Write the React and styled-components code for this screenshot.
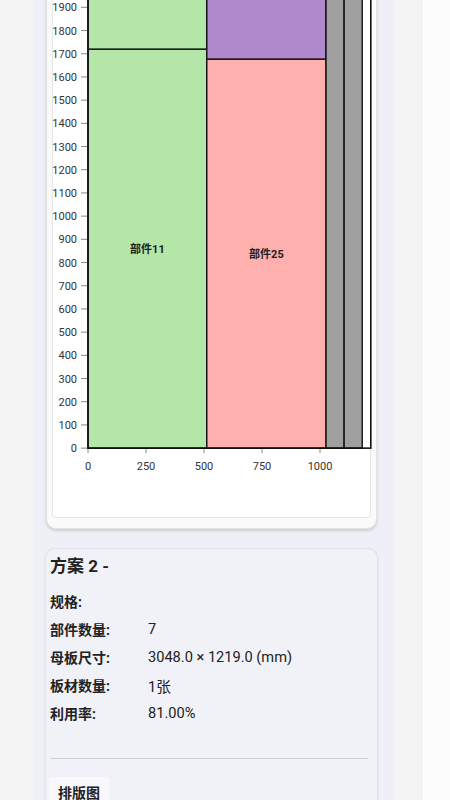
import React from 'react';
import styled, { createGlobalStyle } from 'styled-components';

const GlobalStyle = createGlobalStyle`
  body {
    margin: 0;
    background: #f5f5f5;
    font-family: Roboto, "Noto Sans CJK SC", sans-serif;
    color: #222;
  }
`;

// sheet size in mm (x = width, y = length) and px per mm
const SHEET_W = 1219;
const SHEET_H = 3048;
const S = 0.232;
const PAD_L = 35;
const PAD_T = 10;
const PAD_B = 69;

const parts = [
  { name: '部件11', x: 0, y: 0, w: 512, h: 1720, fill: '#b4e6a8' },
  { name: '部件12', x: 0, y: 1720, w: 512, h: 1240, fill: '#b4e6a8' },
  { name: '部件25', x: 512, y: 0, w: 514, h: 1677, fill: '#feb0ae' },
  { name: '部件26', x: 512, y: 1677, w: 514, h: 1300, fill: '#b088cc' },
  { name: '', x: 1026, y: 0, w: 78, h: SHEET_H, fill: '#a0a0a0' },
  { name: '', x: 1104, y: 0, w: 78, h: SHEET_H, fill: '#a0a0a0' },
];

const specs = [
  { label: '规格:', value: '' },
  { label: '部件数量:', value: '7' },
  { label: '母板尺寸:', value: '3048.0 × 1219.0 (mm)' },
  { label: '板材数量:', value: '1张' },
  { label: '利用率:', value: '81.00%' },
];

const Shell = styled.div`
  display: flex;
  min-height: calc(100vh + 289px);
  margin-top: -289px;
`;

const Gutter = styled.div`
  width: 33px;
  background: #f4f4f4;
`;

const Column = styled.main`
  width: 360px;
  background: #efeff7;
  padding-top: 12px;
  display: flex;
  flex-direction: column;
`;

const Side = styled.div`
  flex: 1;
  background: linear-gradient(to right, #f4f4f4 0 30px, #fcfcfc 30px);
`;

const ChartCard = styled.section`
  margin-left: 13px;
  width: 331px;
  box-sizing: border-box;
  padding: 6px 5px 10px;
  background: #fafafa;
  border: 1px solid #e3e3e3;
  border-radius: 10px;
  box-shadow: 0 2px 3px rgba(0, 0, 0, 0.14);
`;

const ChartBox = styled.div`
  background: #fff;
  border: 1px solid #e6e6e6;
  border-radius: 3px;
  line-height: 0;
`;

const PlanCard = styled.section`
  margin: 19px 0 0 12px;
  width: 333px;
  box-sizing: border-box;
  padding: 5px 6px 0 4px;
  background: #f1f1f8;
  border: 1px solid #e2e2ea;
  border-bottom: none;
  border-radius: 10px 10px 0 0;
  box-shadow: 0 1px 3px rgba(0, 0, 0, 0.08);
  display: flex;
  flex-direction: column;
`;

const Title = styled.h2`
  margin: 0 0 9px;
  font-size: 17px;
  line-height: 24px;
  font-weight: 700;
`;

const Row = styled.div`
  display: flex;
  align-items: center;
  height: 28px;
  font-size: 14px;
`;

const Label = styled.span`
  width: 98px;
  font-weight: 700;
`;

const Value = styled.span`
  font-size: 14.6px;
  font-weight: 400;
`;

const Divider = styled.hr`
  width: calc(100% - 3px);
  margin: 31px 3px 18px 0;
  border: none;
  border-top: 1px solid #cfcfd6;
`;

const Tab = styled.div`
  align-self: flex-start;
  margin-left: -1px;
  padding: 5px 9px;
  background: #f8f8fb;
  border-radius: 4px 4px 0 0;
  font-size: 14px;
  font-weight: 700;
`;

function LayoutChart() {
  const plotH = SHEET_H * S;
  const width = 317;
  const height = PAD_T + plotH + PAD_B;
  const y0 = PAD_T + plotH;
  const px = (v) => PAD_L + v * S;
  const py = (v) => y0 - v * S;
  const yTicks = [];
  for (let v = 0; v <= 3000; v += 100) yTicks.push(v);
  const xTicks = [0, 250, 500, 750, 1000];

  return (
    <svg width={width} height={height} style={{ overflow: 'visible' }}
      fontFamily='Roboto, "Noto Sans CJK SC", sans-serif'>
      {parts.map((p, i) => (
        <g key={i}>
          <rect x={px(p.x)} y={py(p.y + p.h)} width={p.w * S} height={p.h * S}
            fill={p.fill} stroke="#111" strokeWidth="1.4" />
          {p.name && (
            <text x={px(p.x + p.w / 2)} y={py(p.y + p.h / 2) + 4} textAnchor="middle"
              fontSize="11" fontWeight="700" fill="#222">{p.name}</text>
          )}
        </g>
      ))}
      <rect x={px(0)} y={py(SHEET_H)} width={SHEET_W * S} height={plotH}
        fill="none" stroke="#111" strokeWidth="1.6" />
      {yTicks.map((v) => (
        <g key={v}>
          <line x1={PAD_L - 7} x2={PAD_L - 1} y1={py(v)} y2={py(v)} stroke="#888" />
          <text x={PAD_L - 11} y={py(v) + 4} textAnchor="end" fontSize="11" fill="#333">{v}</text>
        </g>
      ))}
      {xTicks.map((v) => (
        <g key={v}>
          <line x1={px(v)} x2={px(v)} y1={y0 + 1} y2={y0 + 5} stroke="#888" />
          <text x={px(v)} y={y0 + 22} textAnchor="middle" fontSize="11" fill="#333">{v}</text>
        </g>
      ))}
    </svg>
  );
}

export default function App() {
  return (
    <>
      <GlobalStyle />
      <Shell>
        <Gutter />
        <Column>
          <ChartCard>
            <ChartBox>
              <LayoutChart />
            </ChartBox>
          </ChartCard>
          <PlanCard>
            <Title>方案 2 -</Title>
            {specs.map((s) => (
              <Row key={s.label}>
                <Label>{s.label}</Label>
                <Value>{s.value}</Value>
              </Row>
            ))}
            <Divider />
            <Tab>排版图</Tab>
          </PlanCard>
        </Column>
        <Side />
      </Shell>
    </>
  );
}
